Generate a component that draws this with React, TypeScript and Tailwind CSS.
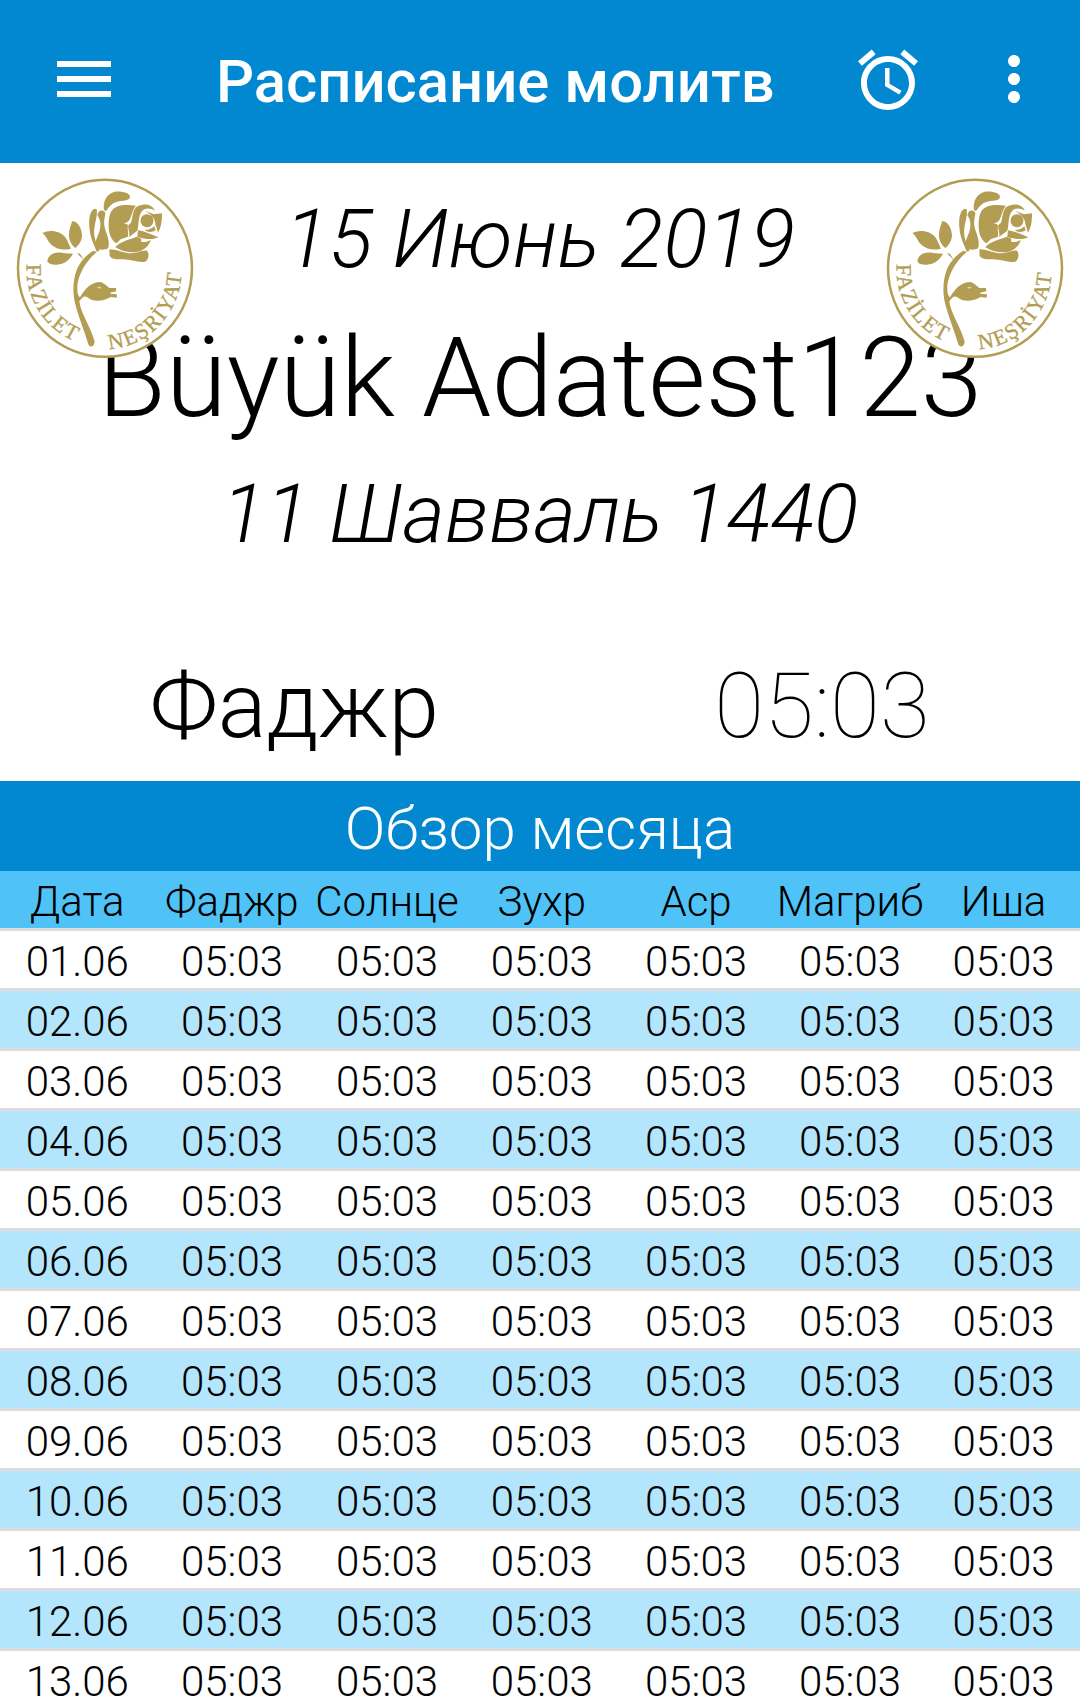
import React from "react";
import { MdAccessAlarm, MdMenu, MdMoreVert } from "react-icons/md";

const columns = ["Дата", "Фаджр", "Солнце", "Зухр", "Аср", "Магриб", "Иша"];
const days = Array.from({ length: 13 }, (_, i) => `${String(i + 1).padStart(2, "0")}.06`);

function Logo({ id }: { id: string }) {
  return (
    <svg viewBox="48 54 536 543" className="block h-[181px] w-[178.67px]" fill="#b29d53">
      <ellipse cx="315" cy="325" rx="261" ry="265.5" fill="#fff" stroke="#b29d53" strokeWidth="7.5" />
      <path d="M312 150C308 125 320 100 345 95C370 93 392 100 390 112C386 125 368 120 350 126C335 130 328 140 318 153Z" />
      <path d="M285 146C270 150 266 175 268 200C270 225 276 240 282 255L290 275L299 272C286 245 280 225 283 205C287 180 293 165 290 148Z" />
      <path d="M296 155C305 148 316 152 316 162C312 180 310 195 318 215C326 235 329 255 324 265C312 272 294 270 289 262C283 250 290 235 298 215C304 195 302 180 292 165Z" />
      <path d="M345 143C365 132 388 135 408 137C397 150 397 162 391 174C387 186 379 189 370 190C378 193 382 192 384 196C382 206 385 214 384 230L362 238L350 250C338 245 326 225 326 200C326 175 328 152 345 143Z" />
      <path d="M393 188C400 168 396 156 409 141C428 129 455 131 465 152C450 143 432 143 424 156C414 172 417 196 412 212L387 231C391 218 383 208 385 196C388 192 391 190 393 188Z" />
      <circle cx="441" cy="182" r="19.5" />
      <path d="M436 153L462 163L486 160C486 180 485 200 474 218L466 192C466 180 460 168 436 153Z" />
      <path d="M434 210C448 210 458 205 463 198L467 211C455 219 440 216 434 210Z" />
      <path d="M414 211C430 213 450 221 475 232C460 240 436 238 412 231Z" />
      <path d="M346 262C358 245 385 240 410 230L424 236L424 246L438 246L452 240C446 262 425 278 396 277C375 276 358 270 346 262Z" />
      <path d="M328 268C350 268 365 278 390 280C410 280 430 270 441 272C449 280 446 300 436 305C415 310 395 298 370 298C350 298 335 298 329 288Z" />
      <path d="M127 219C150 208 180 212 196 232C204 245 208 255 213 266C190 272 170 268 156 256C142 244 140 228 127 219Z" />
      <path d="M216 184C232 182 246 205 246 228C244 245 236 256 226 264C214 255 206 240 207 222C207 206 214 196 216 184Z" />
      <path d="M142 303C145 285 160 276 185 278C200 280 210 280 219 281C208 300 195 313 170 314C155 314 145 312 142 303Z" />
      <path d="M231 280L240 281L251 299Z" />
      <path d="M280 272L290 276C262 300 238 335 232 375C232 395 232 405 240 412C255 385 275 366 300 366C312 368 320 378 328 384L348 384L349 394L330 398L333 402L351 403L350 413L332 411C312 424 280 428 262 412C254 405 246 412 238 424C242 460 270 495 284 545C282 562 268 565 264 550C256 520 232 460 224 425C218 395 218 360 232 325C244 300 258 286 280 272Z" />
      <ellipse cx="298" cy="383" rx="6" ry="2.5" fill="#e0d7b8" />
      <path id={`${id}-left`} fill="none" d="M80 312A236 237 0 0 0 240 550" />
      <path id={`${id}-right`} fill="none" d="M328 567A231 239 0 0 0 545 322" />
      <g fontFamily="Liberation Serif, serif" fontSize="65" stroke="#b29d53" strokeWidth="1">
        <text textLength="289"><textPath href={`#${id}-left`}>FAZİLET</textPath></text>
        <text textLength="342"><textPath href={`#${id}-right`}>NEŞRİYAT</textPath></text>
      </g>
    </svg>
  );
}

const tableRow =
  "grid h-[60px] grid-cols-[154.5px_155px_155px_154.5px_154px_154px_153px] border-b-3 border-[#dddddd] text-center";

export default function App() {
  return (
    <main className="h-[1699px] w-[1080px] overflow-hidden bg-white font-['Roboto',sans-serif] font-light text-black">
      <header className="flex h-[163px] items-center bg-[#0288d1] pl-12 pr-[30px] pb-[5px] text-white">
        <MdMenu className="size-[72px]" />
        <h1 className="ml-[96px] mt-[5px] flex-1 whitespace-nowrap text-[59.8px] font-medium leading-[70px]">Расписание молитв</h1>
        <MdAccessAlarm className="mt-[2px] size-[72px]" />
        <MdMoreVert className="ml-[54px] size-[72px]" />
      </header>

      <section className="relative flex h-[618px] flex-col items-center whitespace-nowrap">
        <p className="mt-[30px] text-[81.6px] italic leading-[92px]">15 Июнь 2019</p>
        <p className="mt-[26px] text-[111px] leading-[134px]">Büyük Adatest123</p>
        <p className="mt-[23px] text-[81.6px] italic leading-[92px]">11 Шавваль 1440</p>
        <div className="mt-[93px] flex w-full text-[91px] leading-[106px]">
          <span className="w-1/2 pl-[49px] text-center">Фаджр</span>
          <span className="w-1/2 pl-12 pr-6 text-center font-thin">05:03</span>
        </div>
        <div className="absolute left-4 top-[15px]"><Logo id="start" /></div>
        <div className="absolute left-[886px] top-[15px]"><Logo id="end" /></div>
      </section>

      <h2 className="h-[90px] bg-[#0288d1] pt-[13px] text-center text-[60px] leading-[70px] text-white">Обзор месяца</h2>

      <div className="text-[42px] leading-[61px]">
        <div className={`${tableRow} bg-[#4fc3f7]`}>
          {columns.map((c) => <span key={c}>{c}</span>)}
        </div>
        {days.map((day) => (
          <div key={day} className={`${tableRow} even:bg-white odd:bg-[#b3e5fc]`}>
            <span>{day}</span>
            {columns.slice(1).map((c) => <span key={c}>05:03</span>)}
          </div>
        ))}
      </div>
    </main>
  );
}
